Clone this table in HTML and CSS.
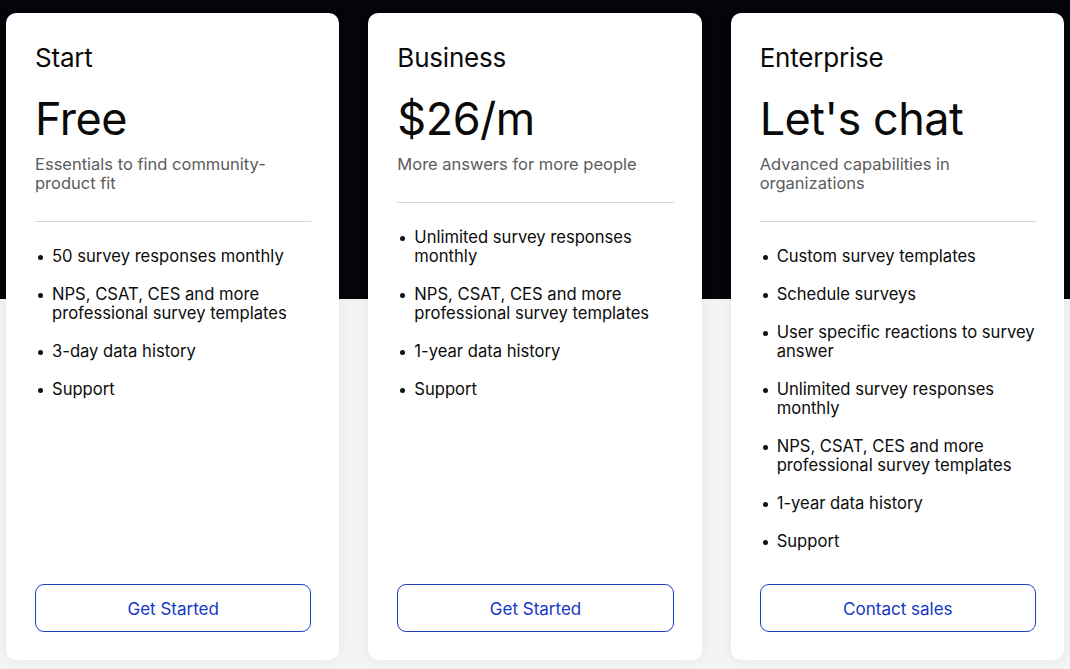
FILE: index.html
```html
<!DOCTYPE html>
<html lang="en">
<head>
<meta charset="utf-8">
<title>Pricing</title>
<link rel="stylesheet" href="styles.css">
</head>
<body>
<main class="plans">
  <section class="card">
    <h2 class="plan-name">Start</h2>
    <p class="price">Free</p>
    <p class="desc">Essentials to find community-product fit</p>
    <hr class="divider">
    <ul class="features">
      <li>50 survey responses monthly</li>
      <li>NPS, CSAT, CES and more professional survey templates</li>
      <li>3-day data history</li>
      <li>Support</li>
    </ul>
    <button class="cta">Get Started</button>
  </section>
  <section class="card">
    <h2 class="plan-name">Business</h2>
    <p class="price">$26/m</p>
    <p class="desc">More answers for more people</p>
    <hr class="divider">
    <ul class="features">
      <li>Unlimited survey responses monthly</li>
      <li>NPS, CSAT, CES and more professional survey templates</li>
      <li>1-year data history</li>
      <li>Support</li>
    </ul>
    <button class="cta">Get Started</button>
  </section>
  <section class="card">
    <h2 class="plan-name">Enterprise</h2>
    <p class="price">Let's chat</p>
    <p class="desc">Advanced capabilities in organizations</p>
    <hr class="divider">
    <ul class="features">
      <li>Custom survey templates</li>
      <li>Schedule surveys</li>
      <li>User specific reactions to survey answer</li>
      <li>Unlimited survey responses monthly</li>
      <li>NPS, CSAT, CES and more professional survey templates</li>
      <li>1-year data history</li>
      <li>Support</li>
    </ul>
    <button class="cta">Contact sales</button>
  </section>
</main>
</body>
</html>
```
FILE: styles.css
```css
* { box-sizing: border-box; }
html, body { margin: 0; padding: 0; }
body {
  font-family: Inter, "Liberation Sans", sans-serif;
  background: linear-gradient(#04050b 0, #04050b 299px, #f4f4f4 299px);
  min-height: 669px;
  color: #0a0a0a;
}
.plans {
  display: grid;
  grid-template-columns: repeat(3, 1fr);
  gap: 29px;
  padding: 13px 6px 9px 6px;
}
.card {
  background: #fff;
  border-radius: 10px;
  height: 647px;
  padding: 30px 28px 28px 29px;
  display: flex;
  flex-direction: column;
  box-shadow: 0 0 14px rgba(0,0,0,0.06);
}
.plan-name {
  margin: 0;
  font-size: 26px;
  font-weight: 400;
  line-height: 30px;
  letter-spacing: -0.2px;
}
.price {
  margin: 17px 0 0 0;
  font-size: 45px;
  font-weight: 400;
  line-height: 58px;
  letter-spacing: -0.5px;
}
.desc {
  margin: 7px 0 0 0;
  font-size: 16.5px;
  line-height: 19px;
  color: #5c5c5c;
  padding-right: 30px;
}
.divider {
  margin: 28px 0 0 0;
  border: 0;
  border-top: 1px solid #d8d8d8;
  height: 0;
}
.features {
  list-style: none;
  margin: 25px 0 0 0;
  padding: 0;
  flex: 1;
}
.features li {
  position: relative;
  padding-left: 17px;
  font-size: 16.6px;
  line-height: 19px;
  margin-bottom: 19px;
  color: #0d0d0d;
}
.features li::before {
  content: "";
  position: absolute;
  left: 3px;
  top: 8px;
  width: 5px;
  height: 5px;
  border-radius: 50%;
  background: #111;
}
.cta {
  height: 48px;
  width: 100%;
  background: #fff;
  border: 1.3px solid #1f3fc0;
  border-radius: 9px;
  color: #1437c4;
  font-family: Inter, "Liberation Sans", sans-serif;
  font-size: 17px;
  padding-top: 2px;
  cursor: pointer;
}
```
